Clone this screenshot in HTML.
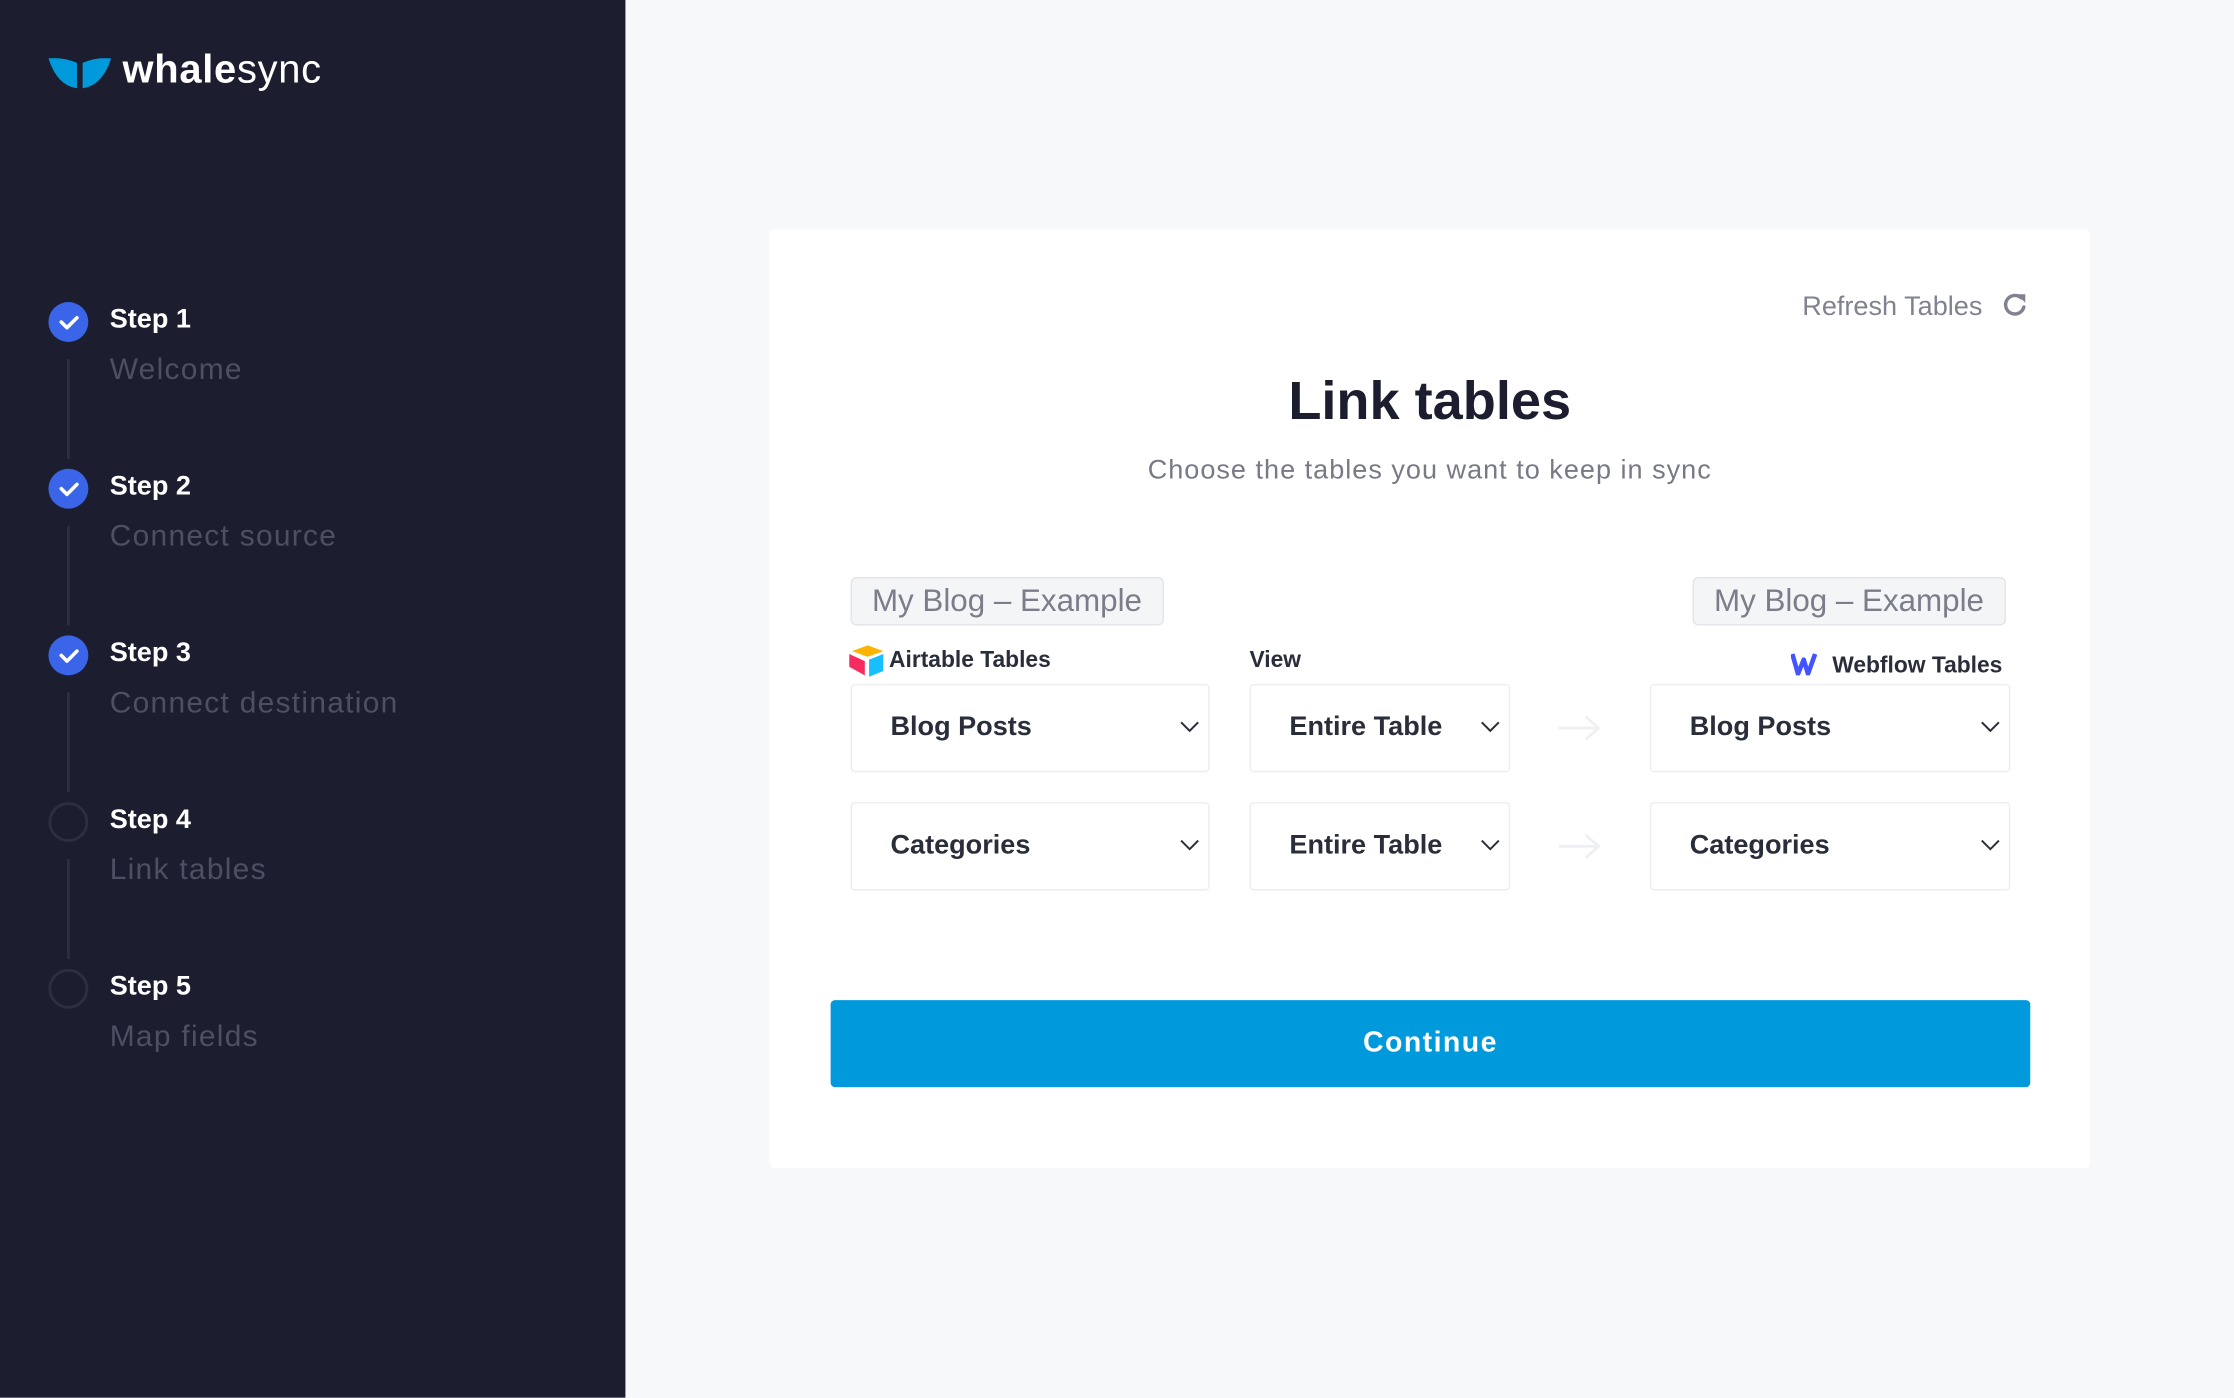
<!DOCTYPE html>
<html><head><meta charset="utf-8"><style>
html,body{margin:0;padding:0;width:2234px;height:1398px;overflow:hidden;background:#f7f8fa}
#s{position:absolute;left:0;top:0;width:1568px;height:981px;transform:scale(1.42474);transform-origin:0 0;font-family:"Liberation Sans",sans-serif}
.a{position:absolute}
.side{left:0;top:0;width:439px;height:981px;background:#1c1e2f}
.main{left:439px;top:0;width:1129px;height:981px;background:#f7f8fa}
.card{left:540px;top:161px;width:927px;height:659px;background:#fff;border-radius:4px}
.circ{width:28px;height:28px;border-radius:50%;box-sizing:border-box}
.done{background:#3a65e8}
.todo{border:2px solid #2c2f40}
.st{font-size:19px;font-weight:bold;color:#fff;left:77px}
.sub{font-size:21px;color:#4c5062;left:77px;letter-spacing:0.9px}
.ln{left:47px;width:2px;background:#2c2f40}
.sel{background:#fff;border:1px solid #ebedf0;border-radius:3px;box-sizing:border-box;height:62px;font-size:19px;color:#2a2d3a;font-weight:bold;line-height:60px;padding-left:27px}
.sel svg{position:absolute;right:6px;top:25px}
.tag{height:34px;border:1px solid #e3e5ea;background:#f4f5f7;border-radius:4px;box-sizing:border-box;font-size:22px;color:#7b7e8a;line-height:32px;padding:0 14px}
.lbl{font-size:16px;color:#2a2d3a;font-weight:bold}
</style></head><body><div id="s">
<div class="a side"></div>
<div class="a main"></div>
<svg class="a" style="left:34px;top:40px" width="44" height="22" viewBox="0 0 44 22"><path d="M0 1 Q10 0 20 4 L20 22 Q6 20 0 1Z" fill="#0099dc"/><path d="M44 1 Q34 0 24 4 L24 22 Q38 20 44 1Z" fill="#0099dc"/></svg>
<div class="a" style="left:86px;top:33px;font-size:28px;color:#fff;letter-spacing:0.5px"><b>whale</b>sync</div>

<div class="a circ done" style="left:34px;top:212px"></div>
<div class="a circ done" style="left:34px;top:329px"></div>
<div class="a circ done" style="left:34px;top:446px"></div>
<svg class="a" style="left:34px;top:212px" width="28" height="262"><g fill="none" stroke="#fff" stroke-width="2.5" stroke-linecap="round" stroke-linejoin="round"><path d="M9 14l4 4 7-7"/><path d="M9 131l4 4 7-7"/><path d="M9 248l4 4 7-7"/></g></svg>
<div class="a circ todo" style="left:34px;top:563px"></div>
<div class="a circ todo" style="left:34px;top:680px"></div>
<div class="a ln" style="top:252px;height:70px"></div>
<div class="a ln" style="top:369px;height:70px"></div>
<div class="a ln" style="top:486px;height:70px"></div>
<div class="a ln" style="top:603px;height:70px"></div>
<div class="a st" style="top:214px">Step 1</div><div class="a sub" style="top:248px">Welcome</div>
<div class="a st" style="top:331px">Step 2</div><div class="a sub" style="top:365px">Connect source</div>
<div class="a st" style="top:448px">Step 3</div><div class="a sub" style="top:482px">Connect destination</div>
<div class="a st" style="top:565px">Step 4</div><div class="a sub" style="top:599px">Link tables</div>
<div class="a st" style="top:682px">Step 5</div><div class="a sub" style="top:716px">Map fields</div>

<div class="a card"></div>
<div class="a" style="left:1265px;top:205px;font-size:19px;color:#808290">Refresh Tables</div>
<svg class="a" style="left:1405px;top:204px" width="20" height="20" viewBox="0 0 20 20"><path d="M15.5 11.5A6.5 6.5 0 1 1 13.5 5" fill="none" stroke="#808290" stroke-width="2.4" stroke-linecap="round"/><path d="M10.5 2.5h6v6z" fill="#808290"/></svg>
<div class="a" style="left:540px;width:927px;top:261px;text-align:center;font-size:38px;font-weight:bold;color:#1c1e2f">Link tables</div>
<div class="a" style="left:540px;width:927px;top:320px;text-align:center;font-size:19px;color:#777a86;letter-spacing:0.7px">Choose the tables you want to keep in sync</div>

<div class="a tag" style="left:597px;top:405px">My Blog – Example</div>
<div class="a tag" style="left:1188px;top:405px">My Blog – Example</div>
<svg class="a" style="left:596px;top:453px" width="26" height="22" viewBox="0 0 26 22"><path d="M13 0l11 4-11 4L2 4z" fill="#fcb400"/><path d="M14 10l10-4v12l-10 4z" fill="#18bfff"/><path d="M0 6l11 5v10L0 15z" fill="#f82b60"/></svg>
<div class="a lbl" style="left:624px;top:455px">Airtable Tables</div>
<div class="a lbl" style="left:877px;top:455px">View</div>
<svg class="a" style="left:1257px;top:458px" width="23" height="16" viewBox="0 0 23 16"><path d="M1 1l4 14 4-10 3 10 5-14" fill="none" stroke="#4353ff" stroke-width="3.2" stroke-linejoin="round"/></svg>
<div class="a lbl" style="left:1286px;top:459px">Webflow Tables</div>

<div class="a sel" style="left:597px;top:480px;width:252px">Blog Posts<svg width="14" height="9"><path d="M1 1l6 6 6-6" fill="none" stroke="#2a2d3a" stroke-width="1.4"/></svg></div>
<div class="a sel" style="left:877px;top:480px;width:183px">Entire Table<svg width="14" height="9"><path d="M1 1l6 6 6-6" fill="none" stroke="#2a2d3a" stroke-width="1.4"/></svg></div>
<div class="a sel" style="left:1158px;top:480px;width:253px">Blog Posts<svg width="14" height="9"><path d="M1 1l6 6 6-6" fill="none" stroke="#2a2d3a" stroke-width="1.4"/></svg></div>
<div class="a sel" style="left:597px;top:563px;width:252px">Categories<svg width="14" height="9"><path d="M1 1l6 6 6-6" fill="none" stroke="#2a2d3a" stroke-width="1.4"/></svg></div>
<div class="a sel" style="left:877px;top:563px;width:183px">Entire Table<svg width="14" height="9"><path d="M1 1l6 6 6-6" fill="none" stroke="#2a2d3a" stroke-width="1.4"/></svg></div>
<div class="a sel" style="left:1158px;top:563px;width:253px">Categories<svg width="14" height="9"><path d="M1 1l6 6 6-6" fill="none" stroke="#2a2d3a" stroke-width="1.4"/></svg></div>
<svg class="a" style="left:1092px;top:500px" width="32" height="104"><g fill="none" stroke="#eef0f3" stroke-width="2"><path d="M2 11h28M21 3l9 8-9 8"/><path d="M2 94h28M21 86l9 8-9 8"/></g></svg>

<div class="a" style="left:583px;top:702px;width:842px;height:61px;background:#0099dc;border-radius:3px;color:#fff;font-size:20px;font-weight:bold;text-align:center;line-height:61px;letter-spacing:1px">Continue</div>
</div></body></html>
